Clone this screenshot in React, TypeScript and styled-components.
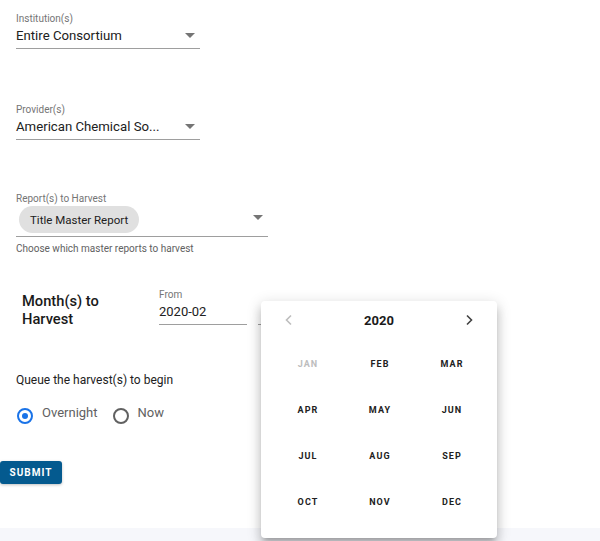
import styled, { createGlobalStyle } from "styled-components";

const Global = createGlobalStyle`
  html, body {
    margin: 0;
    padding: 0;
    background: #fff;
    font-family: Roboto, "Liberation Sans", sans-serif;
    color: #212121;
  }
`;

const Page = styled.div`
  width: 600px;
  height: 541px;
  display: flex;
  flex-direction: column;
  position: relative;
  overflow: hidden;
`;

const Main = styled.div`
  flex: 1;
  display: flex;
  flex-direction: column;
  background: #fff;
`;

const Footer = styled.div`
  height: 13px;
  background: #f6f7fb;
`;

const Form = styled.div`
  display: flex;
  flex-direction: column;
  padding: 13px 0 0 16px;
`;

const SelectField = styled.div<{ $width: number; $gap?: number }>`
  width: ${(p) => p.$width}px;
  margin-bottom: ${(p) => p.$gap ?? 0}px;
  display: flex;
  flex-direction: column;
`;

const Label = styled.div`
  font-size: 10px;
  line-height: 12px;
  color: #757575;
`;

const ValueRow = styled.div<{ $height?: number; $top?: boolean }>`
  display: flex;
  align-items: ${(p) => (p.$top ? "flex-start" : "center")};
  justify-content: space-between;
  height: ${(p) => p.$height ?? 21}px;
  padding-top: ${(p) => (p.$top ? 1 : 0)}px;
  border-bottom: 1px solid #9e9e9e;
  padding-right: 5px;
  padding-bottom: ${(p) => (p.$top ? 3 : 2)}px;
`;

const Value = styled.span`
  font-size: 13.2px;
  color: #212121;
  white-space: nowrap;
`;

const Caret = styled.span<{ $offset?: number }>`
  width: 0;
  height: 0;
  margin-top: ${(p) => p.$offset ?? 0}px;
  border-left: 5px solid transparent;
  border-right: 5px solid transparent;
  border-top: 5px solid #757575;
`;

const Chip = styled.span`
  display: inline-flex;
  align-items: center;
  height: 27px;
  padding: 0 11px;
  margin-left: 3px;
  border-radius: 14px;
  background: #e0e0e0;
  font-size: 11.5px;
  color: #212121;
`;

const Helper = styled.div`
  font-size: 10px;
  line-height: 12px;
  color: #616161;
  margin-top: 6px;
`;

const MonthsRow = styled.div`
  display: flex;
  align-items: flex-start;
  margin-top: 34px;
`;

const MonthsTitle = styled.div`
  width: 137px;
  padding-left: 6px;
  padding-top: 3px;
  font-size: 14.7px;
  font-weight: 500;
  line-height: 18px;
  color: #1a1a1a;
`;

const DateField = styled.div<{ $width: number }>`
  width: ${(p) => p.$width}px;
  margin-right: 11px;
  display: flex;
  flex-direction: column;
`;

const DateValue = styled.div`
  font-size: 13px;
  line-height: 22px;
  height: 23px;
  border-bottom: 1px solid #9e9e9e;
`;

const Queue = styled.div`
  font-size: 12px;
  line-height: 14px;
  color: #212121;
  margin-top: 45px;
`;

const RadioGroup = styled.div`
  display: flex;
  align-items: flex-start;
  gap: 15px;
  margin-top: 18px;
  padding-left: 1px;
`;

const RadioOption = styled.label`
  display: flex;
  align-items: flex-start;
  gap: 9px;
  font-size: 13px;
  line-height: 16px;
  color: #616161;
`;

const RadioCircle = styled.span<{ $checked: boolean }>`
  width: 12px;
  height: 12px;
  margin-top: 3px;
  border-radius: 50%;
  border: 2px solid ${(p) => (p.$checked ? "#1a73e8" : "#616161")};
  display: flex;
  align-items: center;
  justify-content: center;
  &::after {
    content: "";
    width: 6px;
    height: 6px;
    border-radius: 50%;
    background: ${(p) => (p.$checked ? "#1a73e8" : "transparent")};
  }
`;

const SubmitButton = styled.button`
  align-self: flex-start;
  margin-top: 37px;
  margin-left: -16px;
  height: 23px;
  width: 62px;
  border: none;
  border-radius: 3px;
  background: #045a8f;
  color: #fff;
  font-family: Roboto, "Liberation Sans", sans-serif;
  font-size: 10px;
  font-weight: 700;
  letter-spacing: 1px;
  box-shadow: 0 1px 3px rgba(0, 0, 0, 0.25);
  padding: 0;
`;

const Picker = styled.div`
  position: absolute;
  left: 261px;
  top: 301px;
  width: 236px;
  height: 237px;
  background: #fff;
  border-radius: 4px;
  box-shadow: 0 5px 5px -3px rgba(0, 0, 0, 0.2), 0 8px 10px 1px rgba(0, 0, 0, 0.14),
    0 3px 14px 2px rgba(0, 0, 0, 0.12);
  display: flex;
  flex-direction: column;
`;

const PickerHeader = styled.div`
  display: flex;
  align-items: center;
  justify-content: space-between;
  height: 38px;
  padding: 0 22px;
`;

const Year = styled.div`
  font-size: 13px;
  font-weight: 700;
  color: #1a1a1a;
`;

const Chevron = styled.svg<{ $muted?: boolean }>`
  width: 12px;
  height: 12px;
  stroke: ${(p) => (p.$muted ? "#bdbdbd" : "#424242")};
  fill: none;
  stroke-width: 1.6;
`;

const MonthGrid = styled.div`
  display: grid;
  grid-template-columns: repeat(3, 72px);
  grid-auto-rows: 46px;
  padding: 2px 10px 0 11px;
`;

const Month = styled.div<{ $disabled?: boolean }>`
  display: flex;
  align-items: center;
  justify-content: center;
  font-size: 9px;
  font-weight: 700;
  letter-spacing: 1.1px;
  color: ${(p) => (p.$disabled ? "#bdbdbd" : "#212121")};
`;

const MONTHS = ["JAN", "FEB", "MAR", "APR", "MAY", "JUN", "JUL", "AUG", "SEP", "OCT", "NOV", "DEC"];

export default function App() {
  return (
    <Page>
      <Global />
      <Main>
        <Form>
          <SelectField $width={184} $gap={55}>
            <Label>Institution(s)</Label>
            <ValueRow>
              <Value>Entire Consortium</Value>
              <Caret />
            </ValueRow>
          </SelectField>
          <SelectField $width={184} $gap={53}>
            <Label>Provider(s)</Label>
            <ValueRow>
              <Value>American Chemical So...</Value>
              <Caret />
            </ValueRow>
          </SelectField>
          <SelectField $width={252}>
            <Label>Report(s) to Harvest</Label>
            <ValueRow $height={27} $top>
              <Chip>Title Master Report</Chip>
              <Caret $offset={9} />
            </ValueRow>
            <Helper>Choose which master reports to harvest</Helper>
          </SelectField>
          <MonthsRow>
            <MonthsTitle>
              Month(s) to
              <br />
              Harvest
            </MonthsTitle>
            <DateField $width={88}>
              <Label>From</Label>
              <DateValue>2020-02</DateValue>
            </DateField>
            <DateField $width={88}>
              <Label>&nbsp;</Label>
              <DateValue />
            </DateField>
          </MonthsRow>
          <Queue>Queue the harvest(s) to begin</Queue>
          <RadioGroup>
            <RadioOption>
              <RadioCircle $checked />
              Overnight
            </RadioOption>
            <RadioOption>
              <RadioCircle $checked={false} />
              Now
            </RadioOption>
          </RadioGroup>
          <SubmitButton type="button">SUBMIT</SubmitButton>
        </Form>
      </Main>
      <Footer />
      <Picker>
        <PickerHeader>
          <Chevron $muted viewBox="0 0 12 12">
            <path d="M8 1.5 L3.5 6 L8 10.5" />
          </Chevron>
          <Year>2020</Year>
          <Chevron viewBox="0 0 12 12">
            <path d="M4 1.5 L8.5 6 L4 10.5" />
          </Chevron>
        </PickerHeader>
        <MonthGrid>
          {MONTHS.map((m, i) => (
            <Month key={m} $disabled={i === 0}>
              {m}
            </Month>
          ))}
        </MonthGrid>
      </Picker>
    </Page>
  );
}
